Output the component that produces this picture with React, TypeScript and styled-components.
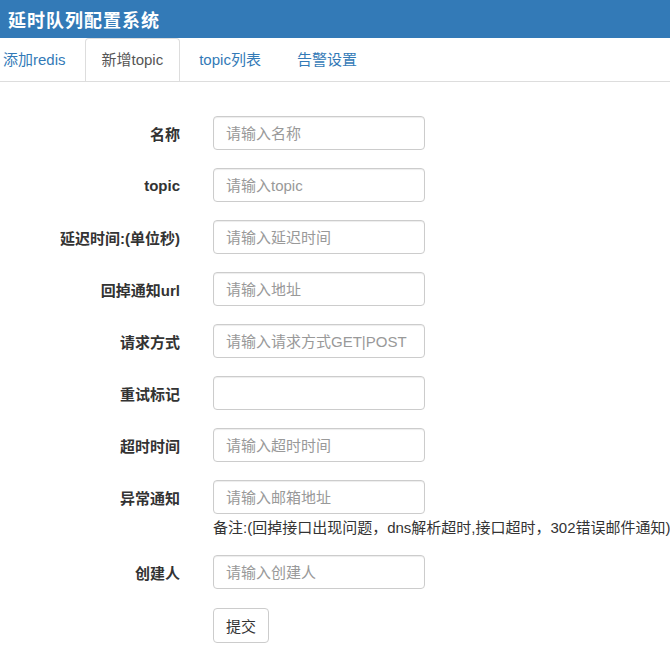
import React from 'react';
import styled, { createGlobalStyle } from 'styled-components';

const GlobalStyle = createGlobalStyle`
  html, body {
    margin: 0;
    padding: 0;
    background: #fff;
    font-family: "Liberation Sans", "Noto Sans CJK SC", sans-serif;
    font-size: 15px;
    color: #333;
  }
  * { box-sizing: border-box; }
`;

const Header = styled.div`
  height: 38px;
  background: #337ab7;
  display: flex;
  align-items: center;
  padding-left: 8px;
`;

const Title = styled.h1`
  margin: 0;
  font-size: 18px;
  font-weight: bold;
  color: #fff;
  letter-spacing: 1px;
`;

const Tabs = styled.ul`
  display: flex;
  list-style: none;
  margin: 0;
  padding: 0;
  height: 44px;
  border-bottom: 1px solid #ddd;
  overflow: hidden;
`;

const TabItem = styled.li<{ $first?: boolean }>`
  margin-right: 2px;
  margin-left: ${(p) => (p.$first ? '-14px' : '0')};
`;

const TabLink = styled.a<{ $active?: boolean }>`
  display: block;
  height: 45px;
  padding: 11px 16px 0;
  line-height: 20px;
  text-decoration: none;
  color: ${(p) => (p.$active ? '#555' : '#337ab7')};
  background: ${(p) => (p.$active ? '#fff' : 'transparent')};
  border: 1px solid ${(p) => (p.$active ? '#ddd' : 'transparent')};
  border-bottom-color: transparent;
  border-radius: 4px 4px 0 0;
  cursor: pointer;
`;

const Form = styled.form`
  display: grid;
  grid-template-columns: 180px 212px;
  column-gap: 33px;
  row-gap: 18px;
  padding-top: 34px;
  align-items: start;
`;

const Label = styled.label`
  height: 34px;
  display: flex;
  align-items: center;
  justify-content: flex-end;
  font-weight: bold;
  color: #333;
  white-space: nowrap;
`;

const Field = styled.div``;

const Input = styled.input`
  display: block;
  width: 212px;
  height: 34px;
  padding: 6px 12px;
  font-family: inherit;
  font-size: 15px;
  color: #555;
  background: #fff;
  border: 1px solid #ccc;
  border-radius: 4px;
  box-shadow: inset 0 1px 1px rgba(0, 0, 0, 0.075);
  &::placeholder { color: #999; }
`;

const Note = styled.div`
  margin-top: 4px;
  line-height: 19px;
  white-space: nowrap;
  color: #333;
`;

const SubmitButton = styled.button`
  height: 35px;
  margin-top: 1px;
  padding: 6px 12px;
  font-family: inherit;
  font-size: 15px;
  color: #333;
  background: #fff;
  border: 1px solid #ccc;
  border-radius: 4px;
  cursor: pointer;
`;

const fields = [
  { label: '名称', placeholder: '请输入名称' },
  { label: 'topic', placeholder: '请输入topic' },
  { label: '延迟时间:(单位秒)', placeholder: '请输入延迟时间' },
  { label: '回掉通知url', placeholder: '请输入地址' },
  { label: '请求方式', placeholder: '请输入请求方式GET|POST' },
  { label: '重试标记', placeholder: '' },
  { label: '超时时间', placeholder: '请输入超时时间' },
  {
    label: '异常通知',
    placeholder: '请输入邮箱地址',
    note: '备注:(回掉接口出现问题，dns解析超时,接口超时，302错误邮件通知)',
  },
  { label: '创建人', placeholder: '请输入创建人' },
];

const tabs = ['添加redis', '新增topic', 'topic列表', '告警设置'];

export default function App() {
  return (
    <>
      <GlobalStyle />
      <Header>
        <Title>延时队列配置系统</Title>
      </Header>
      <Tabs>
        {tabs.map((t, i) => (
          <TabItem key={t} $first={i === 0}>
            <TabLink $active={i === 1}>{t}</TabLink>
          </TabItem>
        ))}
      </Tabs>
      <Form onSubmit={(e) => e.preventDefault()}>
        {fields.map((f) => (
          <React.Fragment key={f.label}>
            <Label>{f.label}</Label>
            <Field>
              <Input placeholder={f.placeholder} />
              {f.note && <Note>{f.note}</Note>}
            </Field>
          </React.Fragment>
        ))}
        <div />
        <Field>
          <SubmitButton type="submit">提交</SubmitButton>
        </Field>
      </Form>
    </>
  );
}
